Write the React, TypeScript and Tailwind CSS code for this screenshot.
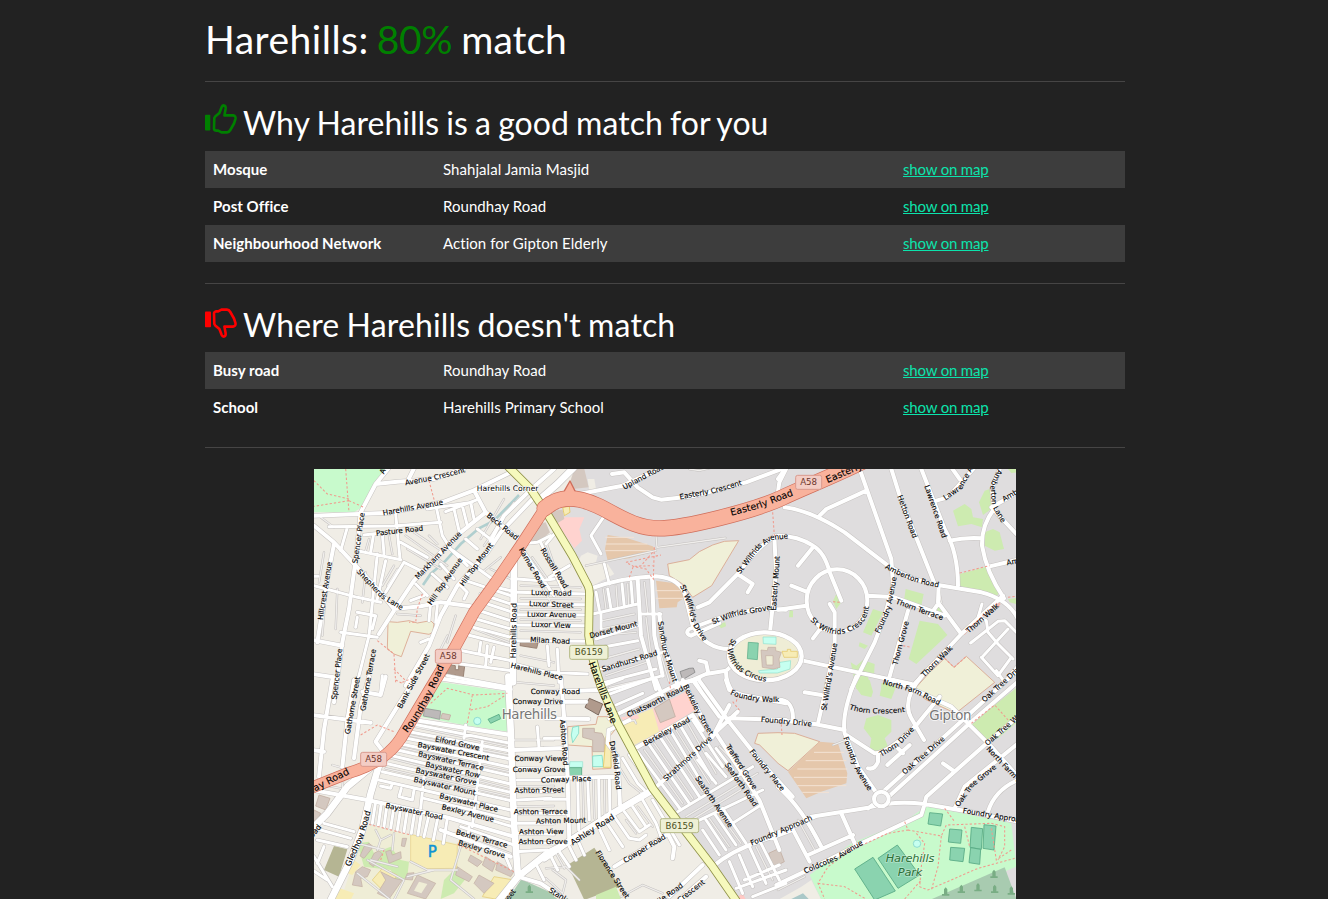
import React from "react";

type Area = [fill: string, points: string, stroke?: string];
type Label = [text: string, path: string, size?: number];
type Sector = {
  x: number;
  y: number;
  areas: Area[];
  wide: string;
  mid: string;
  thin: string;
  service: string;
  foot: string;
  labels: Label[];
};

const PARK = "#c8facc";
const GREEN = "#cdebb0";
const SCHOOL = "#f0f0d8";
const EDGE = "#d9a38c";
const BUILD = "#d4c8c0";
const BEDGE = "#c3aea2";
const ALLOT = "#e5c7ab";
const PITCH = "#8ad3af";
const PEDGE = "#55a883";
const WATER = "#c6fff0";
const BROWN = "#b09a8c";
const YELLOW = "#f7ecb5";
const OLIVE = "#b5b593";

const northWest: Sector = {
  x: 0,
  y: 0,
  areas: [
    [PARK, "0,0 215,0 200,35 150,110 120,130 0,130"],
    [SCHOOL, "222,458 250,460 285,455 310,462 350,455 360,465 356,490 345,496 290,487 262,563 240,555 220,540", EDGE],
    [BROWN, "404,587 424,590 424,602 434,602 434,590 452,592 447,630 425,626 425,618 412,622 395,615", "#8f7769"],
    [BROWN, "620,515 645,520 645,516 672,522 668,538 618,530", "#8f7769"],
    [BUILD, "640,225 665,165 695,160 708,190 680,215"],
  ],
  wide: "M600,250 L597,640 M672,95 L730,45 L780,-5",
  mid: "M230,-10 L185,45 L140,130 L128,250 L105,420 L85,520 L60,700 M0,140 L230,131 L390,98 L480,64 L600,5 M185,45 L250,38 L360,30 L450,-2 M280,38 L300,-2 M480,64 L515,130 L620,215 M515,130 L440,190 L390,240 L300,335 L240,425 L195,495 M0,170 L60,220 L130,295 L200,370 L240,420 L320,412 L380,400 L470,412 M60,225 L40,330 L10,520 M-5,513 L85,530 M660,85 L560,190 L520,250 L430,350 L380,440 L345,530 L275,650 M720,0 L650,62 L570,140 L530,215 M-5,615 L60,625",
  thin: "M45,173 L240,171 L380,160 M150,198 L200,192 M365,105 L385,200 L410,240 L480,290 L535,330 M0,350 L130,385 L200,400 M130,245 L260,272 M245,135 L258,270 M205,195 L210,255 M178,200 L170,250 M100,175 L80,245 M190,255 L165,500 L130,640 M80,490 L190,505 M270,280 L330,310 M215,370 L270,280 M215,275 L190,390 M395,128 L490,92 M420,120 L435,185 M445,110 L460,170 M470,100 L480,150 M340,120 L475,100 M0,322 L12,322 M130,430 L185,440 L175,480 M130,445 L125,475 M205,620 L200,670 M260,220 L340,265 M305,345 L340,380 M290,395 L330,380 M380,285 L420,330 M355,315 L400,355 M405,235 L460,290 M455,210 L490,240 M490,180 L535,215 M350,400 L345,455 M370,410 L365,460 M440,350 L460,370 L450,390 M320,520 L345,510 M455,335 L590,380 M500,375 L590,405 M490,395 L590,428 M480,420 L590,455 M470,445 L590,480 M460,470 L590,505 M450,495 L590,530 M445,545 L590,575 M440,585 L590,605 M500,520 L495,555 M520,530 L515,590 M540,535 L530,580 M545,355 L590,365 M610,370 L820,375 M610,405 L820,407 M610,437 L820,438 M610,468 L820,470 M610,515 L820,517 M610,330 L680,335 L720,330 M600,585 L700,610 L820,615 M625,240 L720,380 M680,220 L750,370 M620,225 L670,220 L710,200 M700,530 L705,590 M730,540 L735,640 M400,620 L590,655",
  service: "M20,145 L60,175 M165,210 L155,245 M225,200 L235,255 M275,200 L400,290 M280,240 L380,300 M300,190 L390,250 M345,200 L370,225 M70,360 L65,480 M30,250 L15,340 M155,310 L145,400 M570,90 L500,210 M600,100 L510,230 M530,300 L590,330 M425,440 L400,520 M400,500 L370,560 M480,480 L585,520 M35,370 L25,500 M560,265 L510,305 M250,435 L320,440 M620,350 L800,355 M620,388 L800,390 M620,422 L800,422 M620,452 L800,455 M620,485 L800,490 M620,560 L720,580 M610,640 L720,650 M250,300 L220,350 M240,290 L205,350 M640,270 L710,400 M655,265 L700,330 M700,230 L735,330",
  foot: "M95,0 L105,130 M105,95 L0,112 M105,95 L150,115 M105,90 L40,75 L0,35 M345,35 L365,110 M325,375 L310,420 L305,460 L285,460 M190,515 L240,555 L245,640 M240,600 L275,635 M265,640 L300,625",
  labels: [
    ["Avenue Crescent", "M278,40 L360,25 L448,3"],
    ["Avenue", "M203,12 L232,-60"],
    ["Harehills Avenue", "M205,132 L388,98"],
    ["Pasture Road", "M187,192 L326,177"],
    ["Spencer Place", "M122,282 L144,132"],
    ["Hillcrest Avenue", "M18,453 L46,278"],
    ["Shepherds Lane", "M132,302 L205,380 L268,418"],
    ["Markham Avenue", "M308,325 L436,192"],
    ["Hill Top Avenue", "M345,405 L440,268"],
    ["Hill Top Mount", "M440,350 L533,222"],
    ["Beck Road", "M524,138 L608,206"],
    ["Karnac Road", "M621,238 L690,355"],
    ["Rossall Road", "M686,240 L757,355"],
    ["Luxor Road", "M652,370 L772,372"],
    ["Luxor Street", "M646,403 L778,408"],
    ["Luxor Avenue", "M638,435 L788,437"],
    ["Luxor View", "M652,465 L770,469"],
    ["Milan Road", "M650,511 L767,517"],
    ["Harehills Place", "M592,588 L660,605 L745,626"],
    ["Harehills Road", "M597,570 L600,400", 23],
    ["Spencer Place", "M60,690 L77,540"],
    ["Bank Side Street", "M256,715 L340,557"],
  ],
};

const north: Sector = {
  x: 696,
  y: 0,
  areas: [
    ["#f0ede5", "90,290 105,260 125,250 155,260 150,280 185,285 205,315 140,350 120,330"],
    ["#f0ede5", "125,30 145,30 150,60 130,70"],
    [BUILD, "85,0 115,0 128,55 80,60 72,40"],
    ["#ffd3cf", "45,145 115,145 100,180 108,215 85,238 35,165"],
    [YELLOW, "50,115 70,112 72,130 55,140", "#e4c660"],
    [BUILD, "20,125 50,122 55,150 35,162 15,145"],
    [ALLOT, "185,198 245,208 320,232 332,245 250,268 185,275 177,240"],
    [ALLOT, "330,335 405,345 425,380 395,400 392,415 340,418"],
    [SCHOOL, "365,285 430,272 460,248 500,228 535,217 578,215 497,350 440,385 410,345 370,320", EDGE],
    [GREEN, "515,465 538,460 540,472 525,478"],
    ["#bdb9b9", "402,608 430,598 442,597 447,610 410,632", "#888"],
  ],
  wide: "",
  mid: "M100,75 L230,50 L340,0 M198,15 L235,10 L275,55 L320,85 L345,92 L440,82 L600,40 L720,-5 M695,75 L700,40 L720,0 M130,360 Q230,325 330,322 Q410,328 420,390 L440,470 Q480,540 550,540 M275,330 L285,500 L330,660 M318,325 L325,500 L350,620 M720,202 L680,205 Q630,240 575,315 L490,400 L455,415 M575,315 L620,345 L605,370 M685,200 L690,310 L672,490 M720,422 L640,418 L510,450 L430,480 Q415,492 435,500 L520,462 M340,435 L350,520 L400,660 M390,655 L480,615 L540,605 L570,580 M460,575 L480,580 L487,612 M540,610 Q540,640 560,670",
  thin: "M170,148 L135,200 L165,255 M175,285 L190,345 M150,370 L160,422 M185,360 L195,420 M228,345 L235,415 M255,340 L260,405 M140,435 L275,405 M165,435 L165,480 M285,435 L345,435 M140,540 L275,515 M165,600 L350,550 M175,640 L330,600 M150,510 L275,470 M185,665 L350,620 M10,325 L70,290 M0,225 L25,195 M450,640 L465,665",
  service: "M210,350 L215,415 M172,360 L180,420 M245,345 L248,410 M295,340 L305,430 M120,290 L330,245 M330,200 L333,235 L538,207 M170,455 L265,435 M165,480 L265,460 M155,500 L270,490 M170,570 L280,540 M180,620 L300,580 M300,445 L315,560 M340,540 L370,640 M190,655 L320,625 M430,0 L460,5 L500,-5",
  foot: "M240,280 L345,258 M325,235 L322,330 L300,300 L262,292 L240,280 M250,325 L262,292 L320,290 M320,250 L285,290 M680,130 L685,200",
  labels: [
    ["Upland Road", "M235,53 L350,-8"],
    ["Easterly Crescent", "M402,83 L500,65 L585,41"],
    ["Harehills Corner", "M-210,58 L-20,58", 23],
    ["Easterly Road", "M556,132 L640,110 L738,72", 28.5],
    ["St Wilfrids Avenue", "M578,308 L638,230 L675,205 L722,200"],
    ["St Wilfrids Grove", "M500,458 L570,432 L672,415"],
    ["Easterly Mount", "M682,422 L693,264"],
    ["St Wilfrid's Drive", "M410,350 L435,410 L445,460 L478,512"],
    ["Dorset Mount", "M132,500 L272,464"],
    ["Sandhurst Mount", "M344,458 L358,545 L388,637"],
    ["Sandhurst Road", "M167,601 L334,550"],
    ["Harehills Lane", "M135,580 L166,660 L203,762", 27.5],
  ],
};

const northEast: Sector = {
  x: 1392,
  y: 0,
  areas: [
    [GREEN, "525,125 560,105 580,120 585,145 615,150 612,175 580,165 540,172"],
    [GREEN, "620,65 635,60 640,120 615,138 603,100"],
    [GREEN, "620,190 645,180 665,190 678,240 650,245 620,230"],
    [GREEN, "545,315 635,290 665,370 655,382 543,350"],
    [GREEN, "383,360 437,375 430,410 378,395"],
    [GREEN, "285,420 315,430 280,500 255,490"],
    [GREEN, "425,455 480,465 508,498 415,585 392,570"],
    [GREEN, "218,580 235,590 255,573 290,585 288,620 270,625 280,660 235,660"],
    [GREEN, "245,520 270,530 260,540 242,532"],
    [GREEN, "165,395 175,375 190,400 175,420"],
    [GREEN, "35,422 45,425 45,445 33,445"],
    [GREEN, "690,0 715,0 715,10 700,12"],
    [GREEN, "690,390 715,388 715,405 695,400"],
    [GREEN, "310,655 355,650 340,690 305,680"],
    [GREEN, "470,425 485,410 495,435"],
    [SCHOOL, "455,610 500,568 528,595 565,562 650,640 533,733 440,690 410,660", EDGE],
    ["#f5b5aa", "548,490 560,498 572,485 558,478"],
    ["#f5b5aa", "650,405 660,395 668,405 660,415"],
  ],
  wide: "",
  mid: "M20,115 Q100,125 200,190 L330,290 Q400,335 480,348 L610,370 Q690,390 720,450 M125,140 L145,120 L265,65 M245,0 L340,270 L345,350 L320,440 L290,520 L220,660 M340,0 L365,80 L470,345 M430,0 L500,180 Q540,250 540,350 M515,215 Q560,205 610,208 M475,95 L510,85 L590,-5 M520,-5 L545,30 M665,0 L642,60 L648,120 Q610,170 612,230 Q625,310 678,388 M640,115 L720,70 M645,120 L715,195 M635,292 L720,272 M0,200 Q60,200 105,230 Q140,250 155,310 L190,395 M105,235 L60,290 M86,395 A91,94 0 1 1 268,395 A91,94 0 1 1 86,395 M40,350 L85,368 M0,422 L85,410 M155,405 L170,430 L170,520 L145,660 M130,475 L105,508 M268,380 L345,384 L500,440 M482,350 L480,400 L550,495 L400,655 M480,405 L455,440 M550,495 L675,380 M390,425 L330,640 M75,575 L240,610 L400,645 M0,30 L25,-5",
  thin: "M612,405 L600,445 L625,455 L630,490 L660,525 L705,570 M578,522 L660,457 L680,455 L720,495 M612,565 L690,480 M610,565 L660,620 L700,565 M655,605 L680,640 M690,625 L720,590",
  service: "M480,350 L490,400",
  foot: "M545,312 L635,290 M565,485 L660,400 M500,568 L528,595 L565,562 M375,530 L400,535 M165,398 L185,400 M690,385 L715,382",
  labels: [
    ["Easterly Road", "M150,33 L322,-40", 28.5],
    ["Hetton Road", "M365,78 L412,207"],
    ["Lawrence Road", "M447,50 L500,204"],
    ["Lawrence Avenue", "M506,82 L545,55 L605,-55"],
    ["Amberton Lane", "M668,0 L645,50 L650,110 L680,162"],
    ["Amberton Road", "M680,88 L815,10"],
    ["Amberton Road", "M690,280 L848,250"],
    ["Amberton Road", "M324,290 Q395,332 483,347"],
    ["Thorn Terrace", "M355,396 L495,446"],
    ["Foundry Avenue", "M296,492 L330,420 L348,323"],
    ["Thorn Grove", "M350,587 L385,457"],
    ["Thorn Walk", "M568,487 L658,408"],
    ["Thorn Walk", "M435,618 L518,535"],
    ["St Wilfrids Crescent", "M98,444 Q140,490 185,487 Q262,475 265,405"],
    ["St Wilfrid's Avenue", "M137,725 L170,522"],
  ],
};

const southWest: Sector = {
  x: 0,
  y: 633,
  areas: [
    [PARK, "375,5 580,35 582,155 450,135 320,110 345,70"],
    ["#bdb9b9", "332,85 380,93 377,118 350,112 328,108", "#999"],
    [BUILD, "385,100 410,105 405,120 380,115", BEDGE],
    [PITCH, "522,118 555,103 560,116 530,130", PEDGE],
    ["#efedd6", "165,435 290,465 430,490 500,520 600,575 570,660 80,660 110,570"],
    [GREEN, "130,490 165,485 180,520 230,500 260,540 285,545 280,590 250,610 230,570 150,560"],
    [GREEN, "390,600 430,560 460,590 420,640 380,657"],
    [YELLOW, "290,463 430,495 428,565 335,566 290,545", "#e9d590"],
    [YELLOW, "205,565 250,585 215,640 175,600", "#e4cf80"],
    [YELLOW, "540,590 600,600 560,660 505,650", "#e4cf80"],
    [YELLOW, "65,620 120,640 110,660 50,660"],
    [YELLOW, "120,540 140,555 115,585 100,580"],
    [BUILD, "15,345 48,355 35,390 5,378", BEDGE],
    [BUILD, "0,390 20,400 10,425 -5,418", BEDGE],
    [OLIVE, "60,498 100,508 75,590 30,570"],
    ["#a8cbb0", "622,598 720,642 720,660 580,660"],
  ],
  wide: "M583,-10 L590,150 L600,430 L612,590 M200,240 L170,340 L145,450 L110,540 L40,680 M185,250 L100,320 L40,400 L-10,450 M540,680 L612,590 L700,520 L740,500",
  mid: "M300,0 L250,80 L185,185 L208,215 M165,-10 L140,80 L120,235 M120,0 L100,120 L85,260 M55,0 L30,150 L15,290 M-5,105 L170,128 M-5,330 L160,360 L400,412 L600,470 M300,120 L590,165 M215,-10 L200,45 L145,35 M375,-5 L590,28 M380,450 L590,530 M-5,210 L30,215 M612,590 L680,610 L740,650 M600,210 L740,205",
  thin: "M285,130 L590,190 M270,152 L590,213 M262,172 L590,237 M252,190 L590,262 M240,208 L590,287 M225,225 L590,312 M215,250 L590,337 M205,275 L590,362 M195,300 L590,390 M330,355 L595,420 M395,380 L595,440 M455,135 L450,175 M505,185 L475,440 M330,290 L320,385 M185,365 L175,430 M202,370 L193,435 M219,375 L210,440 M240,380 L230,445 M260,385 L250,450 M280,390 L270,455 M302,395 L292,460 M322,400 L312,465 M345,405 L330,470 M372,410 L358,480 M400,415 L388,490 M235,310 L230,325 L200,318 M300,330 L295,360 L255,350 L262,325 M440,440 L600,495 M465,440 L460,480 M575,530 L590,565 M610,360 L710,355 M610,300 L715,300 M610,265 L720,268 M610,333 L720,335 M605,515 L700,510 M610,400 L720,400 M610,430 L720,430 M610,460 L720,463 M610,488 L720,490 M670,140 L675,205 M665,550 L690,600 M30,430 L120,455 M20,450 L110,475 M10,480 L100,500 M0,530 L55,620 M30,500 L10,550 M-5,570 L40,600",
  service: "M55,255 L90,265 L85,330 M0,310 L80,325 M420,460 L590,520 M185,450 L200,480 L230,465 M240,460 L235,510 M200,480 L190,510 M130,580 L230,660 M160,540 L270,600 L240,660 M290,545 L340,570 L430,570 M440,500 L410,600 L480,657 M280,590 L360,570 M130,490 L210,510 M250,560 L170,540 M600,180 L720,180 M600,230 L720,235 M600,320 L720,318 M600,380 L720,378 M300,140 L585,200 M280,165 L585,225 M250,200 L585,275 M230,235 L585,325 M215,265 L585,350",
  foot: "M350,70 L400,25 L480,45 L580,40 M475,45 L460,130 M470,90 L520,80 L575,45 M165,433 L290,465 M430,492 L600,575 M140,165 L190,135 L240,155 M245,0 L265,10 M200,540 L210,510",
  labels: [
    ["Gathorne Street", "M100,160 L130,-8"],
    ["Gathorne Terrace", "M146,90 L178,-90"],
    ["Roundhay Road", "M276,152 Q330,85 382,-40", 29],
    ["Roundhay Road", "M-100,362 L0,327 L100,276", 29],
    ["Elford Grove", "M365,176 L495,203"],
    ["Bayswater Crescent", "M315,194 L522,233"],
    ["Bayswater Terrace", "M315,221 L507,263"],
    ["Bayswater Row", "M337,252 L495,286"],
    ["Bayswater Grove", "M308,270 L485,307"],
    ["Bayswater Mount", "M302,298 L483,338"],
    ["Bayswater Place", "M380,347 L549,388"],
    ["Bexley Avenue", "M386,380 L538,418"],
    ["Bayswater Road", "M217,376 L384,411"],
    ["Bexley Terrace", "M429,456 L578,495"],
    ["Bexley Grove", "M436,488 L570,526"],
    ["Gledhow Road", "M101,557 L140,470 L162,393", 24.5],
    ["Avenue Road", "M-75,545 L12,443", 23],
    ["Florence Street", "M500,760 L598,632", 22],
  ],
};

const south: Sector = {
  x: 696,
  y: 633,
  areas: [
    [SCHOOL, "65,140 150,133 155,110 205,110 215,140 190,170 195,265 140,268 138,200 65,195", EDGE],
    [BUILD, "110,145 145,145 145,157 168,160 175,175 175,215 140,215 140,180 110,172", BEDGE],
    [WATER, "80,142 98,138 98,160 80,188 76,165", "#7fd9c5"],
    [WATER, "140,228 168,226 172,260 140,260", "#7fd9c5"],
    [WATER, "72,245 110,245 110,262 70,262", "#a5e5d5"],
    [PITCH, "70,263 107,263 107,287 68,287", PEDGE],
    [YELLOW, "180,170 195,190 195,262 172,262", "#e4c660"],
    [YELLOW, "225,125 320,85 340,155 265,195"],
    ["#ffd3cf", "320,85 420,35 448,90 340,155"],
    ["#ffd3cf", "225,112 275,105 280,115 235,128"],
    [BUILD, "325,85 370,57 388,110 343,128", BEDGE],
    [BROWN, "130,55 170,72 157,105 117,82", "#6f5c50"],
    [OLIVE, "65,555 145,503 222,620 115,660"],
    [GREEN, "150,645 210,620 225,657 150,660"],
    [BUILD, "668,520 700,505 715,545 682,562", BEDGE],
    ["#ffc8c4", "575,650 590,640 600,660 580,660"],
    ["#a8cbb0", "0,635 40,660 0,660"],
  ],
  wide: "M-5,535 L60,490 L200,400 L320,330",
  mid: "M320,330 L500,170 L550,75 M0,35 L165,30 M0,66 L120,65 M0,115 L128,117 M45,-5 L55,120 L65,300 L70,490 M190,115 L300,60 L400,10 L460,-5 M268,205 L440,105 L470,150 M330,0 L350,50 M440,0 L520,110 M410,0 L495,165 M455,-5 L545,120 L640,240 L740,350 M540,0 L550,30 L590,45 L720,70 M500,165 L575,95 M550,115 L720,120 M510,160 L640,360 L700,510 M500,560 Q570,500 700,465 L740,450 M470,555 L370,650 M480,590 L400,660 M0,295 L215,290 M205,560 L360,465 M360,450 L385,500 L380,535 M190,150 L250,120 M188,150 L185,190 L215,230 L222,375",
  thin: "M170,50 L320,-5 M165,20 L230,-5 M210,75 L290,40 M-5,358 L65,358 M-5,400 L65,402 M-5,205 L55,205 M-5,175 L55,175 M95,300 L98,450 M125,300 L130,420 M158,300 L160,415 M190,300 L192,410 M40,515 L70,560 M70,500 L90,540 M95,480 L115,525 M15,530 L35,570 M155,435 L190,510 M180,425 L230,500 M205,410 L250,475 L280,480 L300,465 M235,395 L280,455 L310,435 M260,380 L300,440 M290,360 L330,430 L345,470 M320,360 L400,495 M230,235 L275,310 L295,330 M250,225 L320,325 M275,215 L405,390 M310,195 L430,370 M345,175 L460,350 M375,155 L480,330 M405,140 L500,300 M440,120 L530,260 M395,395 L620,260 M440,430 L650,330 M560,430 L645,375 M455,240 L510,310 M480,220 L540,290 M510,205 L560,270 M480,420 L540,510 M505,400 L570,495 M530,385 L600,490 M470,450 L520,525 M550,545 L590,640 M580,525 L620,620 M610,500 L660,610 M645,490 L700,600 M570,625 L720,570 M595,600 L700,555 M620,650 L720,610",
  service: "M230,130 L265,120 L270,130 M200,230 L250,310 L300,350 M0,565 L60,560 L100,600 M0,595 L50,640 L60,600 L20,570 M225,650 L290,615 L350,640 M295,210 L410,370 M325,190 L440,355 M360,170 L470,335 M390,150 L490,310 M425,130 L510,280 M495,210 L550,275 M520,200 L580,260 M420,410 L635,280 M420,430 L600,320 M490,415 L550,500 M515,395 L585,490 M630,500 L680,600 M110,300 L113,420 M142,300 L145,415 M175,300 L177,410 M240,420 L270,460 M275,380 L320,440 M30,520 L55,565",
  foot: "M370,5 L375,35 M560,65 L580,90 M575,45 L570,70 M705,120 L708,165",
  labels: [
    ["Conway Road", "M-43,33 L99,33"],
    ["Conway Drive", "M-98,65 L50,65"],
    ["Ashton Road", "M50,120 L60,255"],
    ["Conway View", "M-92,236 L48,236"],
    ["Conway Grove", "M-98,269 L57,269"],
    ["Conway Place", "M-12,300 L132,295"],
    ["Ashton Street", "M-94,331 L54,329"],
    ["Ashton Terrace", "M-98,395 L66,394"],
    ["Ashton Mount", "M-30,423 L120,420"],
    ["Ashton View", "M-82,455 L54,454"],
    ["Ashton Grove", "M-84,485 L66,485"],
    ["Ashley Road", "M76,490 L203,409", 24.5],
    ["Darfield Road", "M198,185 L210,240 L218,326"],
    ["Chatsworth Road", "M243,105 L330,65 L411,23"],
    ["Berkeley Road", "M296,190 L427,118"],
    ["Berkeley Street", "M420,18 L455,90 L495,160"],
    ["Strathmore Drive", "M355,298 L494,172"],
    ["Foundry Walk", "M555,35 Q610,60 700,58"],
    ["Foundry Drive", "M645,117 L798,131"],
    ["Trafford Grove", "M546,196 L628,325"],
    ["Seaforth Road", "M542,250 L630,376"],
    ["Seaforth Avenue", "M453,290 L556,440"],
    ["Foundry Place", "M616,210 L712,330"],
    ["Cowper Road", "M235,542 L355,468"],
    ["Florence Street", "M156,515 L244,650"],
    ["Roseville Road", "M285,700 L402,618"],
    ["Coldcotes Crescent", "M315,725 L464,610"],
    ["Stanley Road", "M14,630 L130,700"],
    ["Foundry Approach", "M614,490 L797,412"],
  ],
};

const southEast: Sector = {
  x: 1392,
  y: 633,
  areas: [
    [SCHOOL, "0,158 50,160 125,185 30,272 0,250 -55,195 -70,190 -60,160", EDGE],
    [ALLOT, "125,185 180,190 208,280 205,310 130,335 85,355 30,275"],
    [GREEN, "265,115 300,105 340,120 340,155 320,175 332,205 300,220 275,205 280,175 257,145"],
    [GREEN, "235,0 275,0 285,35 280,52 250,45 235,25"],
    [GREEN, "310,10 340,10 335,30 310,25"],
    [GREEN, "580,130 650,75 720,20 720,125 660,175 620,180"],
    [PARK, "445,378 700,430 715,560 480,660 130,660 95,585 220,490 380,425"],
    ["#a8cbb0", "455,660 680,562 715,657"],
    ["#f0ede5", "0,660 70,620 100,600 130,660"],
    ["#aac8c8", "40,657 75,640 95,660"],
    [PITCH, "455,398 494,402 488,438 450,432", PEDGE],
    [PITCH, "515,447 552,450 548,490 511,486", PEDGE],
    [PITCH, "580,442 614,446 610,508 576,502", PEDGE],
    [PITCH, "618,434 654,438 648,510 615,505", PEDGE],
    [PITCH, "518,502 560,505 555,545 515,540", PEDGE],
    [PITCH, "578,503 608,508 605,553 573,548", PEDGE],
    [PITCH, "230,567 285,532 352,633 290,660", PEDGE],
    [PITCH, "300,535 358,495 425,585 360,625", PEDGE],
  ],
  wide: "",
  mid: "M100,410 L270,383 Q350,360 440,372 L600,400 L720,425 M235,-10 Q190,100 200,160 L240,260 L300,345 M205,165 L290,220 Q330,220 420,130 L485,50 M300,220 L300,245 Q290,270 270,265 M345,0 L520,80 L570,130 L640,200 L720,290 M-5,120 L110,132 L200,150 M120,130 L150,0 M-5,60 Q45,55 45,115 M80,37 L130,45 M430,-10 Q370,60 400,115 L438,180 M328,255 L395,195 M360,205 L375,220 M310,340 L560,115 L720,-30 M330,352 L575,130 L720,5 M440,370 L445,350 L620,195 L720,110 M495,250 L530,275 M530,385 L560,320 L720,190 M630,395 Q650,330 720,300 M-5,460 L110,410 M0,320 Q70,380 130,500 M190,400 L230,490 M40,440 L95,545 M90,525 L225,465 M-5,615 L80,575 L250,490 L430,405 L440,372 M270,385 L310,355",
  thin: "M330,0 L345,10",
  service: "M165,195 L200,182 M60,420 L110,510 M80,415 L125,500 M0,630 L60,600 L80,590",
  foot: "M380,425 L390,450 L330,460 L220,510 L150,560 L120,610 L140,657 M120,610 L200,620 L260,655 M390,450 L490,468 L505,435 L640,430 L680,440 L680,500 L660,540 M415,460 L440,490 L430,560 L425,620 L450,630 L600,565 L710,535 M490,468 L480,560 L460,630 M500,385 L530,425 M560,440 L575,500 M640,445 L655,540 L700,510 M380,657 L430,600 M580,130 L650,75 L690,120",
  labels: [
    ["North Farm Road", "M318,5 L410,30 L484,68"],
    ["Thorn Crescent", "M218,80 Q270,100 378,88"],
    ["Thorn Drive", "M308,222 L360,190 L402,145"],
    ["Oak Tree Drive", "M377,277 L494,174"],
    ["Oak Tree Drive", "M614,62 L733,-46"],
    ["Oak Tree Walk", "M628,188 L735,95"],
    ["North Farm Road", "M635,208 L750,330"],
    ["Oak Tree Grove", "M538,374 L580,315 L648,260"],
    ["Foundry Avenue", "M204,172 L235,260 L277,328"],
    ["Foundry Approach", "M556,391 L750,423"],
    ["Coldcotes Avenue", "M80,572 L170,535 L250,487"],
  ],
};

const sectors = [northWest, north, northEast, southWest, south, southEast];

const universityBlocks = [
  "150,500 165,490 178,500 150,535 138,528",
  "180,520 195,512 205,522 178,560 165,550",
  "215,515 230,510 235,525 260,515 262,535 225,550",
  "265,475 278,475 272,500 262,498",
  "125,575 145,560 170,570 160,590 140,595 145,620 115,615",
  "200,575 240,595 265,600 225,657 190,640 215,600",
  "280,580 300,578 295,600 272,598",
  "310,585 365,610 335,657 280,640",
  "470,525 505,545 490,560 462,542",
  "515,530 545,550 535,575 505,555",
  "430,560 475,590 465,605 425,585",
  "495,585 540,610 510,640 480,610",
  "550,545 600,575 590,590 545,570",
];

const trees = [
  [1942, 1258], [1992, 1253], [2042, 1258], [2040, 1213], [2092, 1263], [646, 1258], [1895, 1266],
];

const TRUNK_SW = "M-20,963 L0,953 L100,913 Q215,880 262,805 L345,665 L420,540 L480,430 L545,340 L620,230 L695,115";
const TRUNK_NE = "M692,118 C735,78 790,82 850,110 S960,178 1036,178 S1320,125 1400,88 S1560,20 1645,-22";
const B_ROAD = "M580,-10 L650,60 L700,135 L775,260 L822,350 Q828,362 826,385 L824,500 Q830,560 861,653 L911,763 L1016,958 L1096,1063 L1196,1193 L1270,1300";

/** Lengthens both ends of a label's baseline so that a long name is never clipped. */
function extend(path: string, by = 40) {
  const n = (path.match(/-?\d+(\.\d+)?/g) ?? []).map(Number);
  const k = n.length;
  const past = (ax: number, ay: number, bx: number, by2: number) => {
    const len = Math.hypot(bx - ax, by2 - ay) || 1;
    return `${(bx + ((bx - ax) / len) * by).toFixed(1)},${(by2 + ((by2 - ay) / len) * by).toFixed(1)}`;
  };
  return `M${past(n[2], n[3], n[0], n[1])} L${path.slice(1)} L${past(n[k - 4], n[k - 3], n[k - 2], n[k - 1])}`;
}

const Roads = ({ pick, width, color }: { pick: "wide" | "mid" | "thin" | "service" | "foot"; width: number; color: string }) => (
  <>
    {sectors.map((s, i) =>
      s[pick] ? (
        <path key={i} d={s[pick]} transform={`translate(${s.x} ${s.y})`} stroke={color} strokeWidth={width} />
      ) : null
    )}
  </>
);

const Shield = ({ x, y, w, text, yellow }: { x: number; y: number; w: number; text: string; yellow?: boolean }) => (
  <g>
    <rect x={x} y={y} width={w} height={42} rx={6} fill={yellow ? "#eef0d5" : "#f3cdc5"} stroke={yellow ? "#b3b884" : "#d99a8e"} strokeWidth={3} />
    <text x={x + w / 2} y={y + 30} textAnchor="middle" fontSize={26} fill={yellow ? "#4c5121" : "#6e382e"}>{text}</text>
  </g>
);

function StreetMap() {
  return (
    <svg className="block h-[430px] w-[702px]" viewBox="0 0 2106 1290" fontFamily="'DejaVu Sans', sans-serif" role="img">
      <rect width="2106" height="1290" fill="#f0ede6" />
      <path d="M790,0 H2106 V1290 H1265 L1016,958 L861,653 L824,500 L826,360 L700,140 L760,85 Z" fill="#dfddde" />
      {sectors.map((s, i) => (
        <g key={i} transform={`translate(${s.x} ${s.y})`}>
          {s.areas.map(([fill, points, stroke], j) => (
            <polygon key={j} points={points} fill={fill} stroke={stroke ?? "none"} strokeWidth={2.5} />
          ))}
        </g>
      ))}
      <g transform="translate(0 633)">
        {universityBlocks.map((p) => (
          <polygon key={p} points={p} fill={BUILD} stroke={BEDGE} strokeWidth={2} />
        ))}
        <polygon points="315,605 340,612 322,640 300,632" fill="#efedd6" />
      </g>
      <path d="M874,205 H960 M874,225 H1000 M874,245 H1015 M1025,365 H1110 M1025,388 H1110 M1500,850 H1590 M1475,875 H1597 M1450,900 H1600 M1440,925 H1600 M1450,950 H1597 M1465,970 H1545" stroke="#f3e3d4" strokeWidth={3} />
      <path d="M615,78 L540,155 L495,178 L440,225 L395,275 L350,315 L327,348" fill="none" stroke="#b0cfcf" strokeWidth={8} />
      <g fill="none" strokeLinecap="round" strokeLinejoin="round">
        <Roads pick="service" width={7} color="#c4c1bf" />
        <Roads pick="thin" width={12} color="#c4c1bf" />
        <Roads pick="mid" width={15} color="#c6c3c1" />
        <Roads pick="wide" width={23} color="#c0bdbb" />
        <Roads pick="service" width={4} color="#f0eeec" />
        <Roads pick="thin" width={9} color="#fff" />
        <Roads pick="mid" width={12} color="#fff" />
        <Roads pick="wide" width={20} color="#fff" />
      </g>
      <ellipse cx={1354} cy={562} rx={109} ry={72} fill="#efedd6" stroke="#c6c3c1" strokeWidth={16} />
      <ellipse cx={1354} cy={562} rx={109} ry={72} fill="none" stroke="#fff" strokeWidth={13} />
      <g strokeWidth={2}>
        <path d="M1303,520 l30,2 l-3,50 l-30,-3 Z" fill={PITCH} stroke={PEDGE} />
        <path d="M1347,504 h39 v22 l-38,-2 Z M1334,605 L1390,600 L1398,580 L1430,575 L1428,600 L1390,612 L1336,612 Z" fill={WATER} stroke="#8fe0cd" />
        <path d="M1341,543 L1360,545 L1362,535 L1385,535 L1385,545 L1402,550 L1395,570 L1398,595 L1378,600 L1345,595 Z" fill={BUILD} stroke={BEDGE} />
        <path d="M1355,560 h22 v28 h-20 Z" fill="#efedd6" stroke={BEDGE} />
        <path d="M1404,547 h16 v-6 h10 v6 h20 v18 h-40 Z" fill={YELLOW} stroke="#e4c660" />
      </g>
      <circle cx={1702} cy={990} r={22} fill="#e4e3e3" stroke="#c6c3c1" strokeWidth={15} />
      <circle cx={1702} cy={990} r={22} fill="none" stroke="#fff" strokeWidth={12} />
      <circle cx={490} cy={756} r={11} fill={WATER} stroke="#8fdcd0" strokeWidth={3} />
      <circle cx={1809} cy={1124} r={11} fill={WATER} stroke="#8fdcd0" strokeWidth={3} />
      <g fill="none" strokeDasharray="7 6">
        <Roads pick="foot" width={3.2} color="#f09b8e" />
      </g>
      <g fill="none" strokeLinejoin="round">
        <path d={B_ROAD} stroke="#8f9148" strokeWidth={26} />
        <path d={B_ROAD} stroke="#f6f9bd" strokeWidth={21} />
        <g strokeLinecap="round">
          <path d={TRUNK_SW} stroke="#cf6e5b" strokeWidth={36} />
          <path d={TRUNK_NE} stroke="#cf6e5b" strokeWidth={49} />
          <path d="M740,85 L768,36 L790,80 Z" fill="#f9b29c" stroke="#cf6e5b" strokeWidth={4} />
          <path d={TRUNK_SW} stroke="#f9b29c" strokeWidth={32} />
          <path d={TRUNK_NE} stroke="#f9b29c" strokeWidth={45} />
        </g>
      </g>
      {trees.map(([x, y], i) => (
        <path key={i} d={`M${x - 11},${y + 14} v-5 h6 v-14 l5,-6 l5,6 v14 h6 v5 Z`} fill="#79ad84" />
      ))}
      <g fill="#000">
        {sectors.map((s, i) => (
          <g key={i} transform={`translate(${s.x} ${s.y})`}>
            {s.labels.map(([text, path, size], j) => (
              <React.Fragment key={j}>
                <path id={`street-${i}-${j}`} d={extend(path)} fill="none" />
                <text
                  fontSize={size ?? 21.8}
                  dy={8}
                  textAnchor="middle"
                  stroke={text === "Harehills Corner" ? "#fff" : "#000"}
                  strokeWidth={text === "Harehills Corner" ? 4 : 0.35}
                  paintOrder="stroke"
                >
                  <textPath href={`#street-${i}-${j}`} startOffset="50%">{text}</textPath>
                </text>
              </React.Fragment>
            ))}
          </g>
        ))}
        <path id="circus" d="M1270,480 L1262,512 Q1237,545 1262,580 Q1290,618 1352,629 L1390,632" fill="none" />
        <text fontSize={21.8} dy={8} textAnchor="middle" stroke="#000" strokeWidth={0.35}>
          <textPath href="#circus" startOffset="50%">St Wilfrids Circus</textPath>
        </text>
      </g>
      <Shield x={364} y={541} w={78} text="A58" />
      <Shield x={140} y={850} w={78} text="A58" />
      <Shield x={1445} y={19} w={78} text="A58" />
      <Shield x={767} y={529} w={115} text="B6159" yellow />
      <Shield x={1039} y={1049} w={115} text="B6159" yellow />
      <g textAnchor="middle" stroke="#fff" strokeWidth={5} strokeOpacity={0.8} paintOrder="stroke">
        <text x={646} y={749} fontSize={40} textLength={166} fill="#777">Harehills</text>
        <text x={1909} y={753} fontSize={40} textLength={126} fill="#777">Gipton</text>
        <g fill="#2c7038" fontStyle="italic" fontSize={34} strokeOpacity={0.35}>
          <text x={1788} y={1178} textLength={146}>Harehills</text>
          <text x={1788} y={1220} textLength={74}>Park</text>
        </g>
      </g>
      <text x={355} y={1165} textAnchor="middle" fontSize={45} fill="#1193d4" stroke="#1193d4" strokeWidth={1.5}>P</text>
    </svg>
  );
}

const Thumb = ({ down }: { down?: boolean }) => (
  <svg
    className={down ? "mt-[7px] h-[30px] w-8 shrink-0 -scale-y-100 overflow-visible text-[#ff0000]" : "mt-[5px] h-[30px] w-8 shrink-0 overflow-visible text-[#008000]"}
    viewBox="0 0 32 30"
    aria-hidden="true"
  >
    <rect x="0" y="10.8" width={down ? 6 : 5.3} height="15.8" rx="0.8" fill="currentColor" />
    <path
      d="M9.3 14.2 10.2 12.5 14.4 9 16.7 3 Q17.4 1.3 19 1.4 Q21 1.8 20.6 5 L19.4 11.4 H28 Q31 11.8 30.5 14.8 L29 19.5 25.3 26 Q24 28.4 22 28.4 H16.5 L13.2 26.6 H10.8 Q9 26.2 9 24.5 Z"
      fill="none"
      stroke="currentColor"
      strokeWidth="2.6"
      strokeLinejoin="round"
    />
  </svg>
);

const Matches = ({ rows }: { rows: [string, string][] }) => (
  <div>
    {rows.map(([kind, name]) => (
      <div key={kind} className="grid h-[37px] grid-cols-[230px_460px_230px] items-center text-[15px] leading-[21px] odd:bg-[#3d3d3d]">
        <div className="px-2 font-bold tracking-[0.04px]">{kind}</div>
        <div className="px-2 tracking-[0.05px]">{name}</div>
        <div className="px-2">
          <a href="#map" className="tracking-[-0.18px] text-[#0ce3ac] underline">show on map</a>
        </div>
      </div>
    ))}
  </div>
);

export default function App() {
  return (
    <main className="h-[899px] overflow-hidden bg-[#222222] pl-[205px] font-['Lato',sans-serif] text-white">
      <div className="w-[920px]">
        <h1 className="h-[81px] pt-[18px] text-[39px] leading-[43px]">
          <span className="tracking-[0.5px] [word-spacing:-2.5px]">Harehills: </span>
          <span className="tracking-[-0.3px] text-[#008000]">80%</span>
          <span className="[word-spacing:-1px]"> match</span>
        </h1>
        <hr className="border-[#464545]" />
        <section className="h-[201px] pt-[17px]">
          <h2 className="flex h-[52px] gap-[6px] text-[32px] leading-[35px]">
            <Thumb />
            <span className="pt-[6px] tracking-[0.05px] [word-spacing:-1.1px]">Why Harehills is a good match for you</span>
          </h2>
          <Matches rows={[["Mosque", "Shahjalal Jamia Masjid"], ["Post Office", "Roundhay Road"], ["Neighbourhood Network", "Action for Gipton Elderly"]]} />
        </section>
        <hr className="border-[#464545]" />
        <section className="h-[163px] pt-[17px]">
          <h2 className="flex h-[51px] gap-[6px] text-[32px] leading-[35px]">
            <Thumb down />
            <span className="pt-[6px] tracking-[0.15px] [word-spacing:-1.1px]">Where Harehills doesn't match</span>
          </h2>
          <Matches rows={[["Busy road", "Roundhay Road"], ["School", "Harehills Primary School"]]} />
        </section>
        <hr className="border-[#464545]" />
        <div id="map" className="flex justify-center pt-[21px]">
          <StreetMap />
        </div>
      </div>
    </main>
  );
}
